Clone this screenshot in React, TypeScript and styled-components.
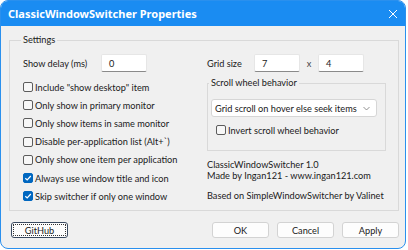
import styled, { createGlobalStyle } from 'styled-components';

const GlobalStyle = createGlobalStyle`
	html, body {
		margin: 0;
		padding: 0;
		background: #ffffff;
	}
	body {
		font-family: Lato, "Noto Sans", sans-serif;
		font-size: 9.2px;
		color: #1a1a1a;
		white-space: nowrap;
	}
`;

const Window = styled.div`
	width: 404px;
	height: 247px;
	border: 1px solid #2a90ee;
	border-radius: 8px;
	overflow: hidden;
	display: flex;
	flex-direction: column;
	background: #f0f0f0;
`;

const TitleBar = styled.div`
	height: 25px;
	background: #1a8cf2;
	display: flex;
	align-items: center;
	justify-content: space-between;
	padding: 0 7px 0 7px;
	flex-shrink: 0;
`;

const Title = styled.span`
	color: #ffffff;
	font-family: "Noto Sans", sans-serif;
	font-weight: 700;
	font-size: 11px;
`;

const Client = styled.div`
	flex: 1;
	display: flex;
	flex-direction: column;
	padding: 8px 6px 0 8px;
`;

const GroupBox = styled.fieldset<{ $inner?: boolean }>`
	margin: 0;
	border: 1px solid #d9d9d9;
	padding: ${(p) => (p.$inner ? '4px 8px 11px 3px' : '8px 12px 5px 13px')};
	min-width: 0;
`;

const Legend = styled.legend`
	padding: 0 2px;
	margin-left: -2px;
	line-height: 12px;
`;

const Columns = styled.div`
	display: grid;
	grid-template-columns: 184px 1fr;
`;

const Column = styled.div`
	display: flex;
	flex-direction: column;
`;

const FieldRow = styled.div`
	display: flex;
	align-items: center;
	height: 18px;
	margin-bottom: 6px;
`;

const Label = styled.span<{ $w: number }>`
	width: ${(p) => p.$w}px;
	flex-shrink: 0;
`;

const TextBox = styled.div`
	width: 46px;
	height: 18px;
	box-sizing: border-box;
	background: #ffffff;
	border: 1px solid #e6e6e6;
	border-bottom-color: #8a8a8a;
	border-radius: 2px;
	display: flex;
	align-items: center;
	padding-left: 7px;
`;

const Times = styled.span`
	width: 18px;
	text-align: center;
	color: #444;
`;

const CheckRow = styled.label`
	display: flex;
	align-items: center;
	height: 18.2px;
	gap: 2px;
`;

const Box = styled.span<{ $on?: boolean }>`
	width: 10px;
	height: 10px;
	box-sizing: border-box;
	border-radius: 2px;
	border: 1px solid ${(p) => (p.$on ? '#0067c0' : '#5c5c5c')};
	background: ${(p) => (p.$on ? '#0067c0' : '#f7f7f7')};
	display: flex;
	align-items: center;
	justify-content: center;
	flex-shrink: 0;
`;

const Combo = styled.div`
	height: 18px;
	box-sizing: border-box;
	background: #ffffff;
	border: 1px solid #d6d6d6;
	border-radius: 3px;
	display: flex;
	align-items: center;
	justify-content: space-between;
	padding: 0 6px 0 3px;
	margin: 6px 0 4px 0;
`;

const InnerCheck = styled.div`
	padding-left: 5px;
`;

const ScrollGroup = styled.div`
	width: 179px;
	margin-top: -1px;
`;

const Info = styled.div`
	margin-top: 8px;
	line-height: 11px;
`;

const Gap = styled.div`
	height: 9px;
`;

const ButtonBar = styled.div`
	display: flex;
	align-items: center;
	margin-top: 11px;
	padding-left: 2px;
`;

const Button = styled.button<{ $focus?: boolean }>`
	width: 57px;
	height: 16px;
	box-sizing: border-box;
	font: inherit;
	color: #1a1a1a;
	background: #fdfdfd;
	border: 1px solid ${(p) => (p.$focus ? '#3a4a60' : '#d3d3d3')};
	border-radius: 3px;
	padding: 0;
	outline: ${(p) => (p.$focus ? '1px dotted #333' : 'none')};
	outline-offset: -3px;
`;

const Spacer = styled.div`
	flex: 1;
`;

const RightButtons = styled.div`
	display: flex;
	gap: 8px;
`;

function Check({ on, children }: { on?: boolean; children: string }) {
	return (
		<CheckRow>
			<Box $on={on}>
				{on && (
					<svg width="8" height="8" viewBox="0 0 8 8">
						<path d="M1.3 4.2 L3.2 6 L6.8 2" fill="none" stroke="#fff" strokeWidth="1.2" />
					</svg>
				)}
			</Box>
			<span>{children}</span>
		</CheckRow>
	);
}

function App() {
	return (
		<>
			<GlobalStyle />
			<Window>
				<TitleBar>
					<Title>ClassicWindowSwitcher Properties</Title>
					<svg width="10" height="10" viewBox="0 0 10 10">
						<path d="M1 1 L9 9 M9 1 L1 9" stroke="#ffffff" strokeWidth="1" />
					</svg>
				</TitleBar>
				<Client>
					<GroupBox>
						<Legend>Settings</Legend>
						<Columns>
							<Column>
								<FieldRow>
									<Label $w={78}>Show delay (ms)</Label>
									<TextBox>0</TextBox>
								</FieldRow>
								<Check>Include "show desktop" item</Check>
								<Check>Only show in primary monitor</Check>
								<Check>Only show items in same monitor</Check>
								<Check>Disable per-application list (Alt+`)</Check>
								<Check>Only show one item per application</Check>
								<Check on>Always use window title and icon</Check>
								<Check on>Skip switcher if only one window</Check>
							</Column>
							<Column>
								<FieldRow>
									<Label $w={47}>Grid size</Label>
									<TextBox>7</TextBox>
									<Times>x</Times>
									<TextBox>4</TextBox>
								</FieldRow>
								<ScrollGroup>
									<GroupBox $inner>
										<Legend>Scroll wheel behavior</Legend>
										<Combo>
											<span>Grid scroll on hover else seek items</span>
											<svg width="7" height="5" viewBox="0 0 7 5">
												<path d="M0.5 1 L3.5 4 L6.5 1" fill="none" stroke="#777" strokeWidth="0.8" />
											</svg>
										</Combo>
										<InnerCheck>
											<Check>Invert scroll wheel behavior</Check>
										</InnerCheck>
									</GroupBox>
								</ScrollGroup>
								<Info>
									<div>ClassicWindowSwitcher 1.0</div>
									<div>Made by Ingan121 - www.ingan121.com</div>
									<Gap />
									<div>Based on SimpleWindowSwitcher by Valinet</div>
								</Info>
							</Column>
						</Columns>
					</GroupBox>
					<ButtonBar>
						<Button $focus>GitHub</Button>
						<Spacer />
						<RightButtons>
							<Button>OK</Button>
							<Button>Cancel</Button>
							<Button>Apply</Button>
						</RightButtons>
					</ButtonBar>
				</Client>
			</Window>
		</>
	);
}

export default App;
